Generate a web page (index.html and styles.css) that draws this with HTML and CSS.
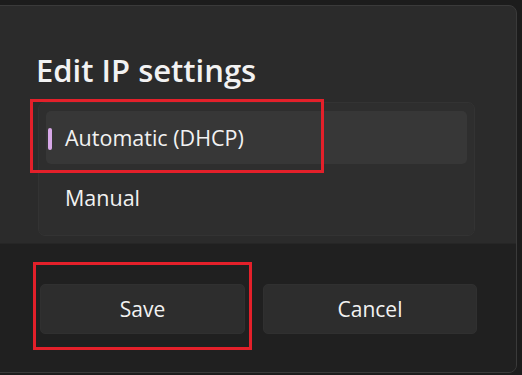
FILE: index.html
```html
<!DOCTYPE html>
<html>
<head>
    <title>Edit IP settings</title>
    <meta charset="UTF-8">
    <meta name="viewport" content="width=device-width, initial-scale=1.0">
    <link rel="stylesheet" href="styles.css">
</head>
<body>

<div class="dialog">
    <div class="dialog-body">
        <h1 class="dialog-title">Edit IP settings</h1>
        <div class="list">
            <div class="list-item selected">Automatic (DHCP)</div>
            <div class="list-item">Manual</div>
        </div>
    </div>
    <div class="dialog-footer">
        <button class="btn btn-save">Save</button>
        <button class="btn btn-cancel">Cancel</button>
    </div>
</div>

<!-- annotation boxes -->
<div class="mark mark-list"></div>
<div class="mark mark-save"></div>

</body>
</html>
```

FILE: styles.css
```css
/* page */
    body{
        padding:0;
        margin:0;
        background-color:#1c1c1c;
        font:normal 18px "Open Sans", "Noto Sans", sans-serif;
        color:#f2f2f2;
        overflow:hidden;
    }
/* dialog */
    .dialog{
        display:flex;
        flex-direction:column;
        width:527px;
        height:368px;
        margin:5px 0 0 -10px;
        box-sizing:border-box;
        border:1px solid #3a3a3a;
        border-radius:8px;
        background-color:#2b2b2b;
        overflow:hidden;
    }
    .dialog-body{
        height:237px;
        padding:0 41px 0 47px;
        box-sizing:border-box;
    }
    .dialog-title{
        margin:0 0 0 -2px;
        padding-top:44px;
        font-size:31px;
        font-weight:600;
        line-height:40px;
    }
    .list{
        margin-top:12px;
        padding:8px 7px;
        height:134px;
        box-sizing:border-box;
        background-color:#2e2e2e;
        border:1px solid #333;
        border-radius:7px;
    }
    .list-item{
        position:relative;
        height:53px;
        padding-left:19px;
        line-height:53px;
        font-size:21.5px;
        border-radius:5px;
    }
    .list-item + .list-item{
        margin-top:7px;
    }
    .list-item.selected{
        background-color:#373737;
    }
    .list-item.selected::before{
        content:"";
        position:absolute;
        left:2px;
        top:17px;
        width:4px;
        height:22px;
        border-radius:2px;
        background-color:#d7a8e8;
    }
/* footer */
    .dialog-footer{
        flex:1;
        display:flex;
        gap:18px;
        padding:40px 0 0 49px;
        border-top:1px solid #262626;
        background-color:#202020;
    }
    .btn{
        height:50px;
        border:1px solid #303030;
        border-radius:5px;
        background-color:#2d2d2d;
        color:#f2f2f2;
        font:normal 21px "Open Sans", "Noto Sans", sans-serif;
    }
    .btn-save{
        width:205px;
    }
    .btn-cancel{
        width:214px;
    }
/* red marks */
    .mark{
        position:absolute;
        border:3px solid #e3202a;
        box-sizing:border-box;
    }
    .mark-list{
        left:30px;
        top:99px;
        width:294px;
        height:74px;
    }
    .mark-save{
        left:33px;
        top:262px;
        width:219px;
        height:88px;
    }
```
